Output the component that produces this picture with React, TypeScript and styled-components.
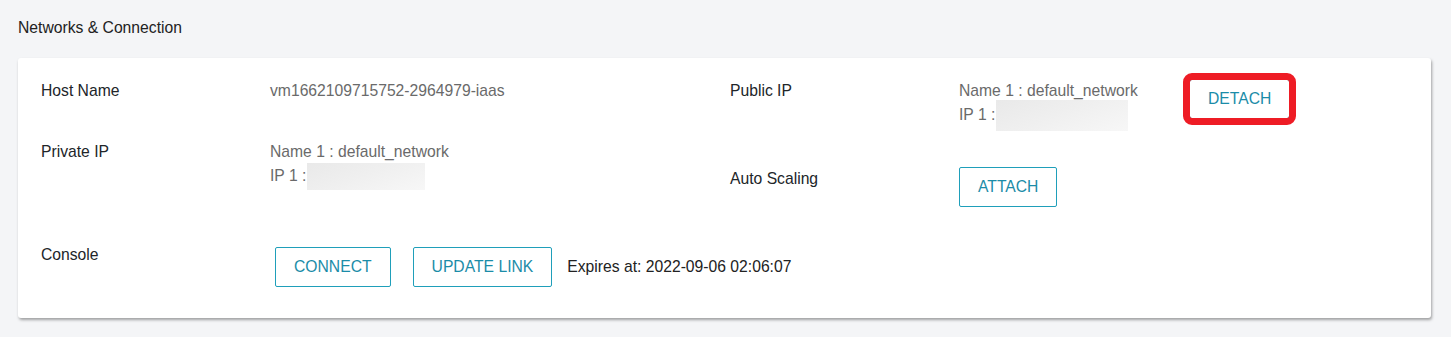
import React from 'react';
import styled, { createGlobalStyle } from 'styled-components';

const GlobalStyle = createGlobalStyle`
  html, body {
    margin: 0;
    padding: 0;
    background: #f4f5f7;
  }
  body {
    font-family: "Liberation Sans", Arial, sans-serif;
    font-size: 15.7px;
    line-height: 24px;
    color: #212529;
  }
`;

const Page = styled.div`
  padding: 16px 20px 19px 18px;
`;

const Title = styled.div`
  margin-bottom: 18px;
  color: #222;
`;

const Card = styled.div`
  background: #fff;
  border-radius: 3px;
  box-shadow: 1px 2px 3px rgba(0, 0, 0, 0.35);
  padding: 21px 23px 31px 23px;
`;

const Top = styled.div`
  display: grid;
  grid-template-columns: 689px 1fr;
`;

const Column = styled.div<{ $gap: number }>`
  display: flex;
  flex-direction: column;
  gap: ${(p) => p.$gap}px;
`;

const Row = styled.div`
  display: grid;
  grid-template-columns: 229px 1fr;
  align-items: start;
`;

const Label = styled.div`
  color: #212529;
`;

const Value = styled.div`
  color: #6a6a6a;
  display: flex;
  align-items: flex-start;
`;

const Lines = styled.div<{ $width?: number }>`
  display: flex;
  flex-direction: column;
  ${(p) => (p.$width ? `width: ${p.$width}px; flex-shrink: 0;` : '')}
`;

const IpLine = styled.div`
  display: flex;
  align-items: center;
  height: 24px;
`;

const Masked = styled.span<{ $w: number; $h: number }>`
  display: inline-block;
  width: ${(p) => p.$w}px;
  height: ${(p) => p.$h}px;
  margin-left: 1px;
  flex-shrink: 0;
  background: linear-gradient(160deg, #e9e9e9 0%, #efefef 45%, #f7f7f7 100%);
`;

const Button = styled.button<{ $flagged?: boolean }>`
  height: 40px;
  padding: 0 18px;
  background: #fff;
  border: 1px solid #1f9fba;
  border-radius: 2px;
  color: #1b8ca8;
  font-family: inherit;
  font-size: 15.7px;
  text-transform: uppercase;
  cursor: pointer;
  flex-shrink: 0;
  ${(p) =>
    p.$flagged
      ? `
    outline: 7px solid #ee1c25;
    outline-offset: -1px;
    border-radius: 3px;
  `
      : ''}
`;

const ConsoleRow = styled(Row)`
  margin-top: 36px;
`;

const Actions = styled.div`
  display: flex;
  align-items: center;
  margin: 4px 0 0 5px;
`;

const ConnectGroup = styled.div`
  display: flex;
  gap: 22px;
`;

const Expires = styled.span`
  margin-left: 15px;
  color: #222;
`;

export default function App() {
  return (
    <>
      <GlobalStyle />
      <Page>
        <Title>Networks &amp; Connection</Title>
        <Card>
          <Top>
            <Column $gap={37}>
              <Row>
                <Label>Host Name</Label>
                <Value>vm1662109715752-2964979-iaas</Value>
              </Row>
              <Row>
                <Label>Private IP</Label>
                <Value>
                  <Lines>
                    <div>Name 1 : default_network</div>
                    <IpLine>
                      IP 1 :<Masked $w={118} $h={27} />
                    </IpLine>
                  </Lines>
                </Value>
              </Row>
            </Column>
            <Column $gap={40}>
              <Row>
                <Label>Public IP</Label>
                <Value>
                  <Lines $width={230}>
                    <div>Name 1 : default_network</div>
                    <IpLine>
                      IP 1 :<Masked $w={132} $h={31} />
                    </IpLine>
                  </Lines>
                  <Button $flagged>Detach</Button>
                </Value>
              </Row>
              <Row>
                <Label>Auto Scaling</Label>
                <Value>
                  <Button>Attach</Button>
                </Value>
              </Row>
            </Column>
          </Top>
          <ConsoleRow>
            <Label>Console</Label>
            <Actions>
              <ConnectGroup>
                <Button>Connect</Button>
                <Button>Update Link</Button>
              </ConnectGroup>
              <Expires>Expires at: 2022-09-06 02:06:07</Expires>
            </Actions>
          </ConsoleRow>
        </Card>
      </Page>
    </>
  );
}
